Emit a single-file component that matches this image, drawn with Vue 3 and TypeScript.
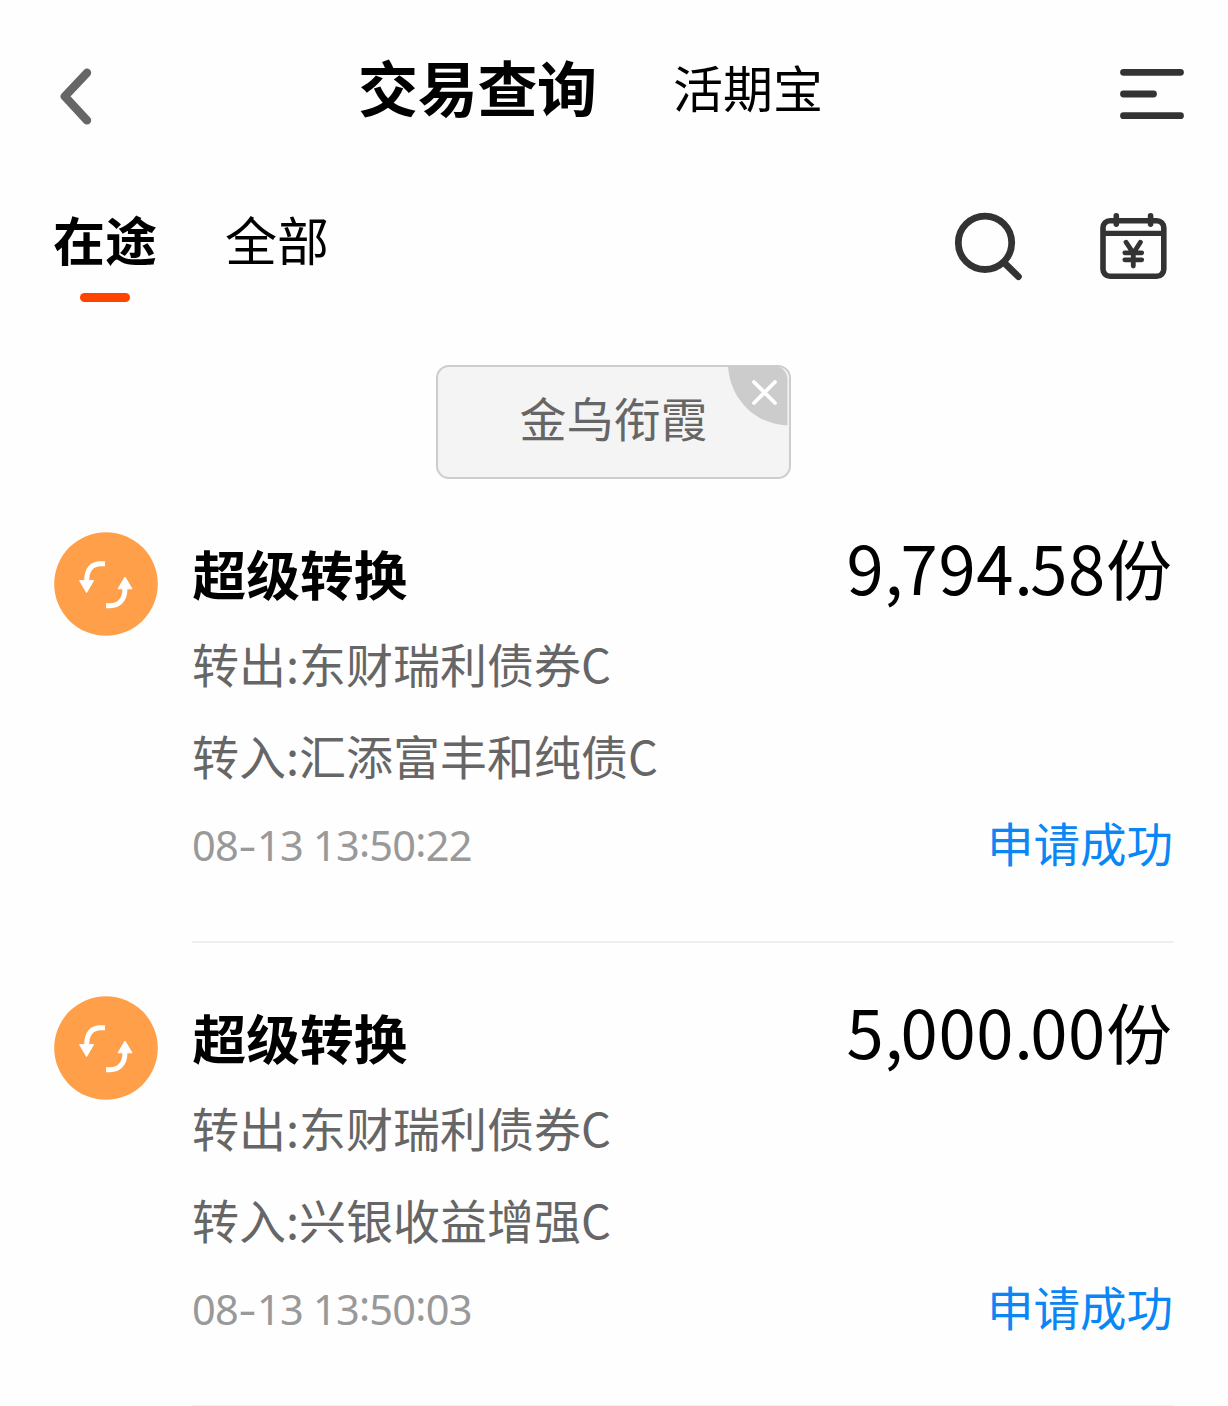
<script setup lang="ts">
interface TradeRecord {
  title: string
  amount: string
  unit: string
  from: string
  to: string
  time: string
  status: string
}

const records: TradeRecord[] = [
  { title: '超级转换', amount: '9,794.58', unit: '份', from: '转出:东财瑞利债券C', to: '转入:汇添富丰和纯债C', time: '08-13 13:50:22', status: '申请成功' },
  { title: '超级转换', amount: '5,000.00', unit: '份', from: '转出:东财瑞利债券C', to: '转入:兴银收益增强C', time: '08-13 13:50:03', status: '申请成功' },
]

// Splits a numeric string so that its punctuation can be spaced separately.
const parts = (text: string): string[] => text.split(/([,.:-])/)

const markClass = (part: string): string => {
  if (part === '-') return 'dash'
  if (part === ':') return 'colon'
  return part === ',' || part === '.' ? 'point' : ''
}
</script>

<template>
  <main class="page">
    <header class="header">
      <svg class="back" width="36" height="60" viewBox="0 0 36 60" fill="none" stroke="#666" stroke-width="8.4" stroke-linecap="round" stroke-linejoin="round">
        <path d="M31 7.8 8.8 31.4 31 55.4" />
      </svg>
      <nav class="heads">
        <span class="head-main">交易查询</span>
        <span class="head-sub">活期宝</span>
      </nav>
      <svg class="menu" width="66" height="54" viewBox="0 0 66 54" stroke="#333" stroke-width="6.8" stroke-linecap="round">
        <path d="M4.5 5.3H61.5M4.5 27H34.5M4.5 48.7H61.5" />
      </svg>
    </header>

    <section class="tabs">
      <span class="tab active">在途</span>
      <span class="tab">全部</span>
      <svg class="search" width="70" height="70" viewBox="0 0 70 70" fill="none" stroke="#333" stroke-width="6.8" stroke-linecap="round">
        <circle cx="32" cy="31.8" r="26.7" />
        <path d="M52 52.5 65.4 65.6" />
      </svg>
      <svg class="calendar" width="68" height="68" viewBox="0 0 68 68" fill="none" stroke="#333" stroke-width="5.6" stroke-linecap="round" stroke-linejoin="round">
        <rect x="3" y="8.8" width="60.8" height="55.4" rx="7" />
        <path d="M4 21.3H63" stroke-width="5.2" />
        <path d="M16.3 3.9V12.1M50.6 3.9V12.1" />
        <path d="M26 30.2 33.3 41.2 40.4 30.2M33.3 41V54M24.8 40.8H41.7M24.8 47.8H41.7" stroke-width="4.8" />
      </svg>
    </section>

    <div class="filter">
      <div class="chip">
        <span>金乌衔霞</span>
        <svg class="close" width="61" height="61" viewBox="0 0 61 61">
          <path d="M0 0H46C54 0 59.5 6 59.5 14V59.5C27 58.5 2 33 0 0Z" fill="#ccc" />
          <path d="M26 16 47 37M47 16 26 37" stroke="#fff" stroke-width="3.8" stroke-linecap="round" />
        </svg>
      </div>
    </div>

    <article v-for="record in records" :key="record.time" class="record">
      <svg class="badge" width="104" height="104" viewBox="0 0 104 104" fill="none">
        <circle cx="52" cy="52" r="51.8" fill="#ff9f4a" />
        <path d="M51 31.8H47C38 31.8 32.7 37 32.7 49M52 73.7H56C65 73.7 71 68 71 56" stroke="#fff" stroke-width="5" />
        <path d="M25.6 48.6H39.6L32.6 60.6ZM64 56.8H78L71 45Z" fill="#fff" stroke="#fff" stroke-width="1" stroke-linejoin="round" />
      </svg>
      <div class="body">
        <div class="row top">
          <span class="title">{{ record.title }}</span>
          <span class="amount"><span v-for="(part, i) in parts(record.amount)" :key="i" :class="markClass(part)">{{ part }}</span><span class="unit">{{ record.unit }}</span></span>
        </div>
        <div class="fund">{{ record.from }}</div>
        <div class="fund">{{ record.to }}</div>
        <div class="row bottom">
          <span class="time"><span v-for="(part, i) in parts(record.time)" :key="i" :class="markClass(part)">{{ part }}</span></span>
          <span class="status">{{ record.status }}</span>
        </div>
      </div>
    </article>
  </main>
</template>

<style>
body {
  background: #fefefe;
  overflow: hidden;
}
</style>

<style scoped>
.page {
  width: 1228px;
  height: 1406px;
  overflow: hidden;
  background: #fefefe;
  color: #000;
  font-family: "Noto Sans CJK SC", sans-serif;
  white-space: nowrap;
}
svg {
  display: block;
  flex: none;
}
.header {
  display: flex;
  height: 170px;
  align-items: flex-start;
}
.back {
  margin: 64.5px 0 0 56px;
}
.heads {
  display: flex;
  align-items: center;
  height: 60px;
  margin: 56px 0 0 266px;
}
.head-main {
  width: 315px;
  font-size: 60px;
  font-weight: 700;
  line-height: 60px;
  letter-spacing: -0.3px;
}
.head-sub {
  font-size: 50px;
  line-height: 60px;
}
.menu {
  margin: 67px 43px 0 auto;
}
.tabs {
  display: flex;
  align-items: flex-start;
  height: 195px;
  padding-left: 54px;
}
.tab {
  display: flex;
  flex-direction: column;
  align-items: center;
  width: 102px;
  margin: 39px 70px 0 0;
  font-size: 52px;
  line-height: 60px;
}
.active {
  font-weight: 700;
}
.active::after {
  content: "";
  width: 50px;
  height: 9px;
  margin-top: 24px;
  border-radius: 5px;
  background: #ff4400;
}
.search {
  margin: 41px 77px 0 auto;
}
.calendar {
  margin: 42px 60px 0 0;
}
.filter {
  display: flex;
  justify-content: center;
  height: 114px;
  padding-right: 1px;
}
.chip {
  position: relative;
  box-sizing: border-box;
  width: 355px;
  height: 114px;
  border: 2px solid #cdcdcd;
  border-radius: 13px;
  background: #f4f4f4;
  color: #666;
  font-size: 47px;
  line-height: 100px;
  text-align: center;
}
.close {
  position: absolute;
  top: -1px;
  right: 0;
}
.record {
  display: flex;
  box-sizing: border-box;
  height: 464px;
  padding-left: 54px;
}
.badge {
  margin-top: 53px;
}
.body {
  flex: 1;
  box-sizing: border-box;
  height: 464px;
  margin: 0 54px 0 34px;
  padding-top: 64px;
  border-bottom: 2px solid #efefef;
}
.row {
  display: flex;
  justify-content: space-between;
  align-items: center;
  height: 60px;
}
.title {
  margin-left: 0.6px;
  font-size: 53.7px;
  font-weight: 700;
  line-height: 64px;
}
.amount {
  margin: -14px 2px 0 0;
  font-size: 67px;
  line-height: 60px;
  letter-spacing: 0.7px;
}
.point {
  letter-spacing: -2.6px;
}
.unit {
  font-size: 66px;
  letter-spacing: 0;
}
.top {
  margin-bottom: 14px;
}
.fund {
  color: #666;
  font-size: 47px;
  line-height: 92px;
}
.bottom {
  margin-top: 11px;
}
.time {
  padding-top: 6px;
  color: #999;
  font-family: "Noto Sans", sans-serif;
  font-size: 41.5px;
  line-height: 60px;
  letter-spacing: -0.75px;
}
.dash {
  display: inline-block;
  width: 19px;
  letter-spacing: 0;
  text-align: center;
  transform: scaleX(1.35);
}
.colon {
  display: inline-block;
  line-height: 1;
  transform: translateY(-4px);
}
.status {
  margin-right: 1px;
  color: #0a87f5;
  font-size: 46.5px;
  line-height: 60px;
}
</style>
